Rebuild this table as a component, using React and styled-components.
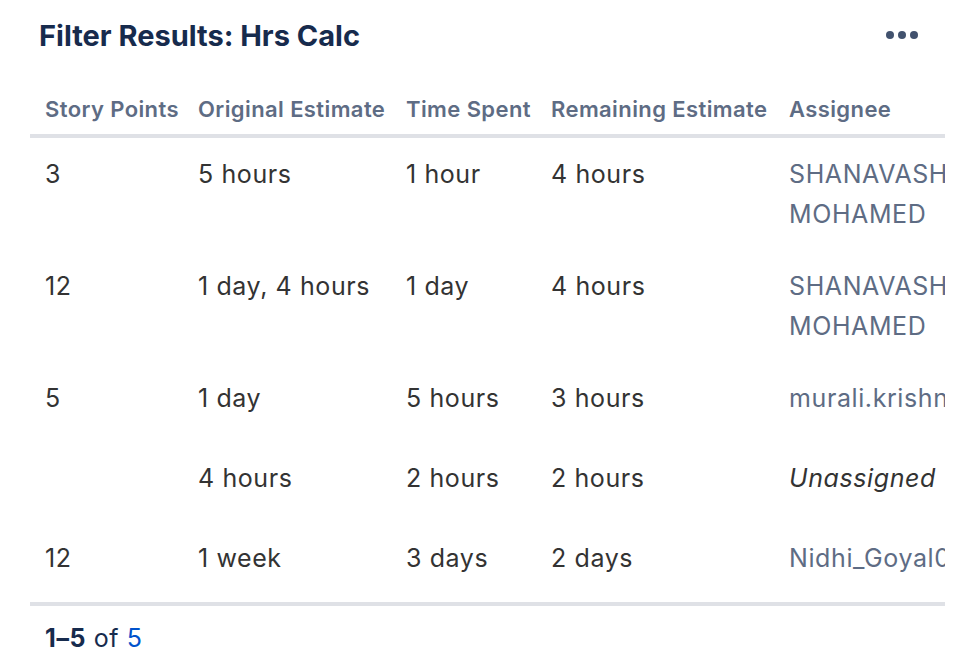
import React from 'react'
import styled, { createGlobalStyle } from 'styled-components'

const GlobalStyle = createGlobalStyle`
  html, body {
    margin: 0;
    padding: 0;
    background: #ffffff;
  }
  body {
    font-family: Inter, "Noto Sans", "Liberation Sans", sans-serif;
    -webkit-font-smoothing: antialiased;
  }
`

const Panel = styled.section`
  width: 915px;
  margin-left: 30px;
  overflow: hidden;
`

const HeaderBar = styled.header`
  height: 70px;
  display: flex;
  align-items: center;
  justify-content: space-between;
  padding: 0 27px 0 9px;
`

const Title = styled.h2`
  margin: 0;
  font-size: 29px;
  font-weight: 700;
  color: #172b4d;
`

const MoreButton = styled.button`
  display: flex;
  gap: 4px;
  align-items: center;
  padding: 0;
  background: none;
  border: 0;
  cursor: pointer;
`

const Dot = styled.span`
  width: 8px;
  height: 8px;
  border-radius: 50%;
  background: #42526e;
`

const Table = styled.table`
  width: 930px;
  table-layout: fixed;
  border-collapse: collapse;
`

const HeadCell = styled.th`
  text-align: left;
  font-size: 22px;
  font-weight: 600;
  letter-spacing: 0.4px;
  line-height: 32px;
  color: #5e6c84;
  white-space: nowrap;
  padding: 23px 9px 9px;
  border-bottom: 4px solid #dfe1e6;
  &:first-child {
    padding-left: 15px;
  }
`

const Row = styled.tr`
  &:last-child td {
    border-bottom: 4px solid #dfe1e6;
  }
`

const Cell = styled.td`
  vertical-align: top;
  padding: 16px 9px;
  height: 48px;
  font-size: 25px;
  letter-spacing: 0.6px;
  line-height: 40px;
  color: ${p => (p.$link ? '#5e6c84' : '#333333')};
  font-style: ${p => (p.$muted ? 'italic' : 'normal')};
  white-space: ${p => (p.$nowrap ? 'nowrap' : 'normal')};
  overflow: hidden;
  &:first-child {
    padding-left: 15px;
  }
`

const Footer = styled.footer`
  padding: 12px 15px;
  font-size: 25px;
  letter-spacing: 0.6px;
  line-height: 40px;
  color: #172b4d;
`

const Strong = styled.strong`
  font-weight: 700;
`

const Total = styled.a`
  color: #0052cc;
  text-decoration: none;
`

const columns = [
  { label: 'Story Points', width: 159 },
  { label: 'Original Estimate', width: 208 },
  { label: 'Time Spent', width: 145 },
  { label: 'Remaining Estimate', width: 238 },
  { label: 'Assignee', width: 180 },
]

const rows = [
  { points: '3', original: '5 hours', spent: '1 hour', remaining: '4 hours', assignee: 'SHANAVASH MOHAMED' },
  { points: '12', original: '1 day, 4 hours', spent: '1 day', remaining: '4 hours', assignee: 'SHANAVASH MOHAMED' },
  { points: '5', original: '1 day', spent: '5 hours', remaining: '3 hours', assignee: 'murali.krishna', nowrap: true },
  { points: '', original: '4 hours', spent: '2 hours', remaining: '2 hours', assignee: null },
  { points: '12', original: '1 week', spent: '3 days', remaining: '2 days', assignee: 'Nidhi_Goyal01', nowrap: true },
]

export default function App() {
  return (
    <>
      <GlobalStyle />
      <Panel>
        <HeaderBar>
          <Title>Filter Results: Hrs Calc</Title>
          <MoreButton aria-label="More actions">
            <Dot />
            <Dot />
            <Dot />
          </MoreButton>
        </HeaderBar>
        <Table>
          <colgroup>
            {columns.map(c => (
              <col key={c.label} style={{ width: c.width }} />
            ))}
          </colgroup>
          <thead>
            <tr>
              {columns.map(c => (
                <HeadCell key={c.label}>{c.label}</HeadCell>
              ))}
            </tr>
          </thead>
          <tbody>
            {rows.map((r, i) => (
              <Row key={i}>
                <Cell>{r.points}</Cell>
                <Cell>{r.original}</Cell>
                <Cell>{r.spent}</Cell>
                <Cell>{r.remaining}</Cell>
                {r.assignee ? (
                  <Cell $link $nowrap={r.nowrap}>{r.assignee}</Cell>
                ) : (
                  <Cell $muted>Unassigned</Cell>
                )}
              </Row>
            ))}
          </tbody>
        </Table>
        <Footer>
          <Strong>1–5</Strong> of <Total href="#">5</Total>
        </Footer>
      </Panel>
    </>
  )
}
